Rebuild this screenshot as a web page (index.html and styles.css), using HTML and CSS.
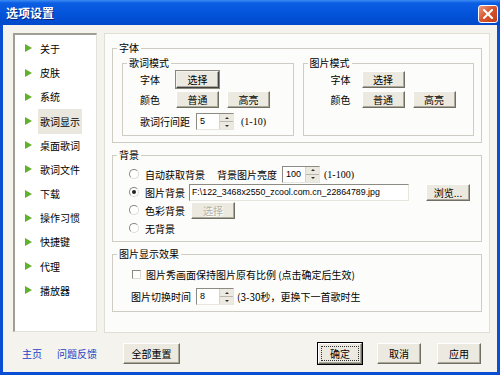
FILE: index.html
```html
<!DOCTYPE html>
<html lang="zh-CN">
<head>
    <meta charset="UTF-8">
    <title>选项设置</title>
    <link rel="stylesheet" href="styles.css">
</head>
<body>

<div class="window">
    <div class="titlebar">
        <span class="title">选项设置</span>
        <span class="close">
            <svg width="10" height="10" viewBox="0 0 10 10"><path d="M1 1L9 9M9 1L1 9" stroke="#fff" stroke-width="2" stroke-linecap="square"/></svg>
        </span>
    </div>

    <div class="client">
        <div class="main">
            <ul class="nav">
                <li><span>关于</span></li>
                <li><span>皮肤</span></li>
                <li><span>系统</span></li>
                <li class="active"><span>歌词显示</span></li>
                <li><span>桌面歌词</span></li>
                <li><span>歌词文件</span></li>
                <li><span>下载</span></li>
                <li><span>操作习惯</span></li>
                <li><span>快捷键</span></li>
                <li><span>代理</span></li>
                <li><span>播放器</span></li>
            </ul>

            <div class="panel">
                <fieldset class="group font-group">
                    <legend>字体</legend>
                    <div class="modes">
                        <fieldset class="group sub lyric">
                            <legend>歌词模式</legend>
                            <div class="rows">
                                <div class="row">
                                    <span class="field-label">字体</span>
                                    <button class="btn dark">选择</button>
                                </div>
                                <div class="row r2">
                                    <span class="field-label">颜色</span>
                                    <button class="btn">普通</button>
                                    <button class="btn gap">高亮</button>
                                </div>
                                <div class="row r3">
                                    <span class="field-label wide">歌词行间距</span>
                                    <span class="spin"><span class="val">5</span><span class="arrows"><i class="up"></i><i class="down"></i></span></span>
                                    <span class="hint">(1-10)</span>
                                </div>
                            </div>
                        </fieldset>
                        <fieldset class="group sub pic">
                            <legend>图片模式</legend>
                            <div class="rows">
                                <div class="row">
                                    <span class="field-label">字体</span>
                                    <button class="btn">选择</button>
                                </div>
                                <div class="row r2">
                                    <span class="field-label">颜色</span>
                                    <button class="btn">普通</button>
                                    <button class="btn gap">高亮</button>
                                </div>
                            </div>
                        </fieldset>
                    </div>
                </fieldset>

                <fieldset class="group bg-group">
                    <legend>背景</legend>
                    <div class="rows">
                        <div class="row">
                            <span class="radio"></span>自动获取背景
                            <span class="bright-label">背景图片亮度</span>
                            <span class="spin bright"><span class="val">100</span><span class="arrows"><i class="up"></i><i class="down"></i></span></span>
                            <span class="hint small">(1-100)</span>
                        </div>
                        <div class="row">
                            <span class="radio checked"></span>图片背景
                            <span class="path">F:\122_3468x2550_zcool.com.cn_22864789.jpg</span>
                            <button class="btn browse">浏览...</button>
                        </div>
                        <div class="row">
                            <span class="radio"></span>色彩背景
                            <button class="btn disabled" disabled>选择</button>
                        </div>
                        <div class="row">
                            <span class="radio"></span>无背景
                        </div>
                    </div>
                </fieldset>

                <fieldset class="group fx-group">
                    <legend>图片显示效果</legend>
                    <div class="rows">
                        <div class="row check-row">
                            <span class="check"></span>图片秀画面保持图片原有比例 (点击确定后生效)
                        </div>
                        <div class="row time-row">
                            <span>图片切换时间</span>
                            <span class="spin"><span class="val">8</span><span class="arrows"><i class="up"></i><i class="down"></i></span></span>
                            <span class="tail">(3-30秒，更换下一首歌时生</span>
                        </div>
                    </div>
                </fieldset>
            </div>
        </div>

        <div class="footer">
            <a class="link home">主页</a>
            <a class="link">问题反馈</a>
            <button class="btn big reset">全部重置</button>
            <div class="actions">
                <button class="btn big default"><span class="focus">确定</span></button>
                <button class="btn big">取消</button>
                <button class="btn big">应用</button>
            </div>
        </div>
    </div>
</div>

</body>
</html>
```

FILE: styles.css
```css
* {
    box-sizing: border-box;
}

body {
    margin: 0;
    font-family: "Noto Sans CJK SC", sans-serif;
    font-size: 10px;
    color: #000;
}

.window {
    width: 500px;
    height: 375px;
    background: #0A4FD3;
    display: flex;
    flex-direction: column;
}

.titlebar {
    height: 25px;
    flex: none;
    display: flex;
    align-items: center;
    justify-content: space-between;
    padding: 0 2px 0 6px;
    background: linear-gradient(#3C8CF4 0, #0B5EE2 3px, #0556DD 45%, #0049CB 100%);
}

.title {
    color: #fff;
    font-size: 12px;
    font-weight: bold;
    text-shadow: 1px 1px #0A237A;
}

.close {
    width: 20px;
    height: 18px;
    margin-top: 2px;
    border: 1px solid #fff;
    border-radius: 3px;
    background: linear-gradient(135deg, #EC9A7C, #D5532C 50%, #C0401A);
    display: flex;
    align-items: center;
    justify-content: center;
}

.client {
    flex: 1;
    margin: 0 3px 3px;
    background: #F4F3EE;
}

.main {
    display: flex;
    padding: 8px 0 0 10px;
}

/* left list */
.nav {
    width: 84px;
    height: 299px;
    margin: 0;
    padding: 1.4px 0 0 10px;
    list-style: none;
    background: #fff;
    border-style: solid;
    border-width: 2px 1px 1px 2px;
    border-color: #A09F96 #E2E1DA #E2E1DA #A09F96;
}

.nav li {
    height: 24.2px;
    display: flex;
    align-items: center;
}

.nav li::before {
    content: "";
    border-left: 7px solid #62B02C;
    border-top: 4.5px solid transparent;
    border-bottom: 4.5px solid transparent;
    margin-right: 8px;
}

.nav li.active span {
    background: #EAE8DE;
    padding: 5px 2px;
    margin-left: -2px;
}

/* right panel */
.panel {
    margin-left: 7px;
    width: 386px;
    height: 300px;
    border: 1px solid #E0DFD6;
    background: #FCFCFA;
    padding: 7px 7px 0;
}

.group {
    margin: 0;
    padding: 0;
    min-width: 0;
    border: 1px solid #CFCDC3;
}

.group legend {
    margin-left: 4px;
    padding: 0 2px;
    line-height: 14px;
    font-size: 10px;
}

.row {
    display: flex;
    align-items: center;
    white-space: nowrap;
}

.btn {
    font: inherit;
    font-size: 10px;
    color: #000;
    width: 43px;
    height: 17px;
    padding: 0;
    background: #ECEAE0;
    border: 1px solid;
    border-color: #fff #716F64 #716F64 #fff;
    box-shadow: inset -1px -1px #ACA899;
}

.btn.dark {
    border-color: #F4F3EE #404040 #404040 #F4F3EE;
    outline: 1px solid #8A887E;
}

.btn.gap {
    margin-left: 8px;
}

.btn.disabled {
    color: #B5B2A6;
    text-shadow: 1px 1px #fff;
    width: 44px;
    margin-left: 6px;
}

.spin {
    display: inline-flex;
    width: 38px;
    height: 17px;
    background: #fff;
    border: 1px solid;
    border-color: #8C8B83 #E6E5DE #E6E5DE #8C8B83;
}

.spin .val {
    flex: 1;
    padding-left: 3px;
    font-family: "Liberation Sans", sans-serif;
    font-size: 9px;
    line-height: 15px;
}

.spin .arrows {
    width: 14px;
    display: flex;
    flex-direction: column;
    background: #ECEAE0;
    border-left: 1px solid #D6D4CA;
}

.spin .arrows i {
    flex: 1;
    display: flex;
    align-items: center;
    justify-content: center;
}

.spin .arrows i.up {
    border-bottom: 1px solid #B9B7AD;
}

.spin .arrows i.up::after {
    content: "";
    border-bottom: 2px solid #333;
    border-left: 2px solid transparent;
    border-right: 2px solid transparent;
}

.spin .arrows i.down::after {
    content: "";
    border-top: 2px solid #333;
    border-left: 2px solid transparent;
    border-right: 2px solid transparent;
}

.hint {
    margin-left: 7px;
    font-family: "Liberation Serif", serif;
    font-size: 10px;
}

/* 字体 */
.modes {
    display: flex;
    gap: 9px;
    padding: 1px 7px 6px 9px;
}

.sub {
    flex: 1;
}

.sub .rows {
    padding: 1px 0 5px 17px;
}

.sub.pic .rows {
    padding-left: 27px;
}

.field-label {
    width: 36px;
}

.pic .field-label {
    width: 31px;
}

.field-label.wide {
    width: 56px;
}

.r2 {
    margin-top: 3px;
}

.r3 {
    margin-top: 5px;
}

/* 背景 */
.bg-group {
    margin-top: 5px;
}

.bg-group .rows {
    padding: 3px 0 4px 16px;
}

.bg-group .row {
    height: 18px;
}

.radio {
    width: 10px;
    height: 10px;
    border-radius: 50%;
    border: 1px solid;
    border-color: #8A897F #DDDCD4 #DDDCD4 #8A897F;
    background: #fff;
    margin-right: 6px;
    display: inline-flex;
    align-items: center;
    justify-content: center;
}

.radio.checked::after {
    content: "";
    width: 4px;
    height: 4px;
    border-radius: 50%;
    background: #222;
}

.bright-label {
    margin-left: 12px;
}

.spin.bright {
    margin-left: 5px;
}

.hint.small {
    margin-left: 4px;
}

.path {
    margin-left: 4px;
    width: 220px;
    height: 17px;
    padding-left: 2px;
    background: #fff;
    border: 1px solid;
    border-color: #8C8B83 #E6E5DE #E6E5DE #8C8B83;
    font-family: "Liberation Sans", sans-serif;
    font-size: 8.8px;
    line-height: 15px;
    overflow: hidden;
}

.btn.browse {
    width: 44px;
    margin-left: 17px;
}

/* 图片显示效果 */
.fx-group {
    margin-top: 5px;
}

.fx-group .rows {
    padding: 5px 0 6px 18px;
}

.check-row {
    height: 16px;
}

.check {
    width: 9px;
    height: 9px;
    margin: 0 5px 0 1px;
    background: #fff;
    border: 1px solid;
    border-color: #8A897F #DDDCD4 #DDDCD4 #8A897F;
}

.time-row {
    margin-top: 6px;
}

.time-row .spin {
    margin-left: 5px;
}

.tail {
    margin-left: 3px;
}

/* footer */
.footer {
    display: flex;
    align-items: center;
    height: 21px;
    margin-top: 10px;
    padding: 0 16px 0 19px;
}

.link {
    color: #1E40C4;
}

.link.home {
    margin-right: 15px;
}

.btn.big {
    height: 21px;
    width: 44px;
}

.btn.reset {
    width: 57px;
    margin-left: 26px;
}

.actions {
    margin-left: auto;
    display: flex;
    gap: 15px;
}

.actions .btn + .btn + .btn {
    margin-left: 1px;
}

.btn.default {
    outline: 1px solid #000;
    outline-offset: 0;
    padding: 2px;
}

.btn.default .focus {
    display: block;
    height: 100%;
    border: 1px dotted #333;
    line-height: 13px;
}
```
